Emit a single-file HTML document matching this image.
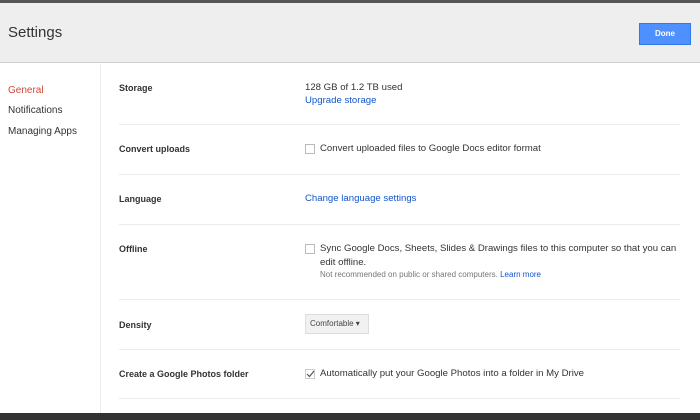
<!DOCTYPE html>
<html><head><style>
*{margin:0;padding:0;box-sizing:border-box}
body{width:700px;height:420px;overflow:hidden;background:#fff;font-family:"Liberation Sans",Arial,sans-serif;position:relative;color:#222}
.top{position:absolute;left:0;top:0;width:700px;height:3px;background:#555}
.hdr{position:absolute;left:0;top:3px;width:700px;height:60px;background:#eeeeee;border-bottom:1px solid #d0d0d0}
.hdr h1{position:absolute;left:8px;top:21px;font-size:15px;font-weight:normal;color:#333}
.done{position:absolute;left:639px;top:20px;width:52px;height:22px;background:#4d90fe;border:1px solid #3079ed;color:#fff;font-size:8px;font-weight:bold;text-align:center;line-height:20px}
.side{position:absolute;left:100px;top:64px;width:1px;height:349px;background:#ececec}
.nav{position:absolute;left:8px;font-size:10px;color:#333}
.lab{position:absolute;left:119px;font-size:9px;font-weight:bold;color:#333}
.val{position:absolute;left:305px;font-size:9.6px;color:#333}
.link{color:#1155cc}
.hr{position:absolute;left:119px;width:561px;height:1px;background:#ebebeb}
.cb{position:absolute;left:305px;width:10px;height:10px;border:1px solid #bbb;background:#fff}
.small{font-size:8px;color:#777}
.bot{position:absolute;left:0;top:413px;width:700px;height:7px;background:#333}
.sel{position:absolute;left:305px;top:314px;width:64px;height:20px;background:#f1f1f1;border:1px solid #ddd;font-size:8px;color:#444;padding-left:4px;line-height:18px}
</style></head><body>
<div class="top"></div>
<div class="hdr"><h1>Settings</h1><div class="done">Done</div></div>
<div class="side"></div>
<div class="nav" style="top:85px;color:#d14836">General</div>
<div class="nav" style="top:105px">Notifications</div>
<div class="nav" style="top:126px">Managing Apps</div>

<div class="lab" style="top:83px">Storage</div>
<div class="val" style="top:82px">128 GB of 1.2 TB used</div>
<div class="val link" style="top:95px">Upgrade storage</div>
<div class="hr" style="top:124px"></div>

<div class="lab" style="top:144px">Convert uploads</div>
<div class="cb" style="top:144px"></div>
<div class="val" style="left:320px;top:143px">Convert uploaded files to Google Docs editor format</div>
<div class="hr" style="top:174px"></div>

<div class="lab" style="top:194px">Language</div>
<div class="val link" style="top:193px">Change language settings</div>
<div class="hr" style="top:224px"></div>

<div class="lab" style="top:244px">Offline</div>
<div class="cb" style="top:244px"></div>
<div class="val" style="left:320px;top:242px;line-height:14px;width:366px">Sync Google Docs, Sheets, Slides &amp; Drawings files to this computer so that you can edit offline.</div>
<div class="val small" style="left:320px;top:270px">Not recommended on public or shared computers. <span class="link">Learn more</span></div>
<div class="hr" style="top:299px"></div>

<div class="lab" style="top:320px">Density</div>
<div class="sel">Comfortable &#9662;</div>
<div class="hr" style="top:349px"></div>

<div class="lab" style="top:369px">Create a Google Photos folder</div>
<div class="cb" style="top:369px;border-color:#ccc"><svg width="10" height="10" style="position:absolute;left:-1px;top:-1px"><path d="M2 5 L4.5 7.5 L9 2" stroke="#555" stroke-width="1.2" fill="none"/></svg></div>
<div class="val" style="left:320px;top:368px">Automatically put your Google Photos into a folder in My Drive</div>
<div class="hr" style="top:398px"></div>
<div class="bot"></div>
</body></html>
